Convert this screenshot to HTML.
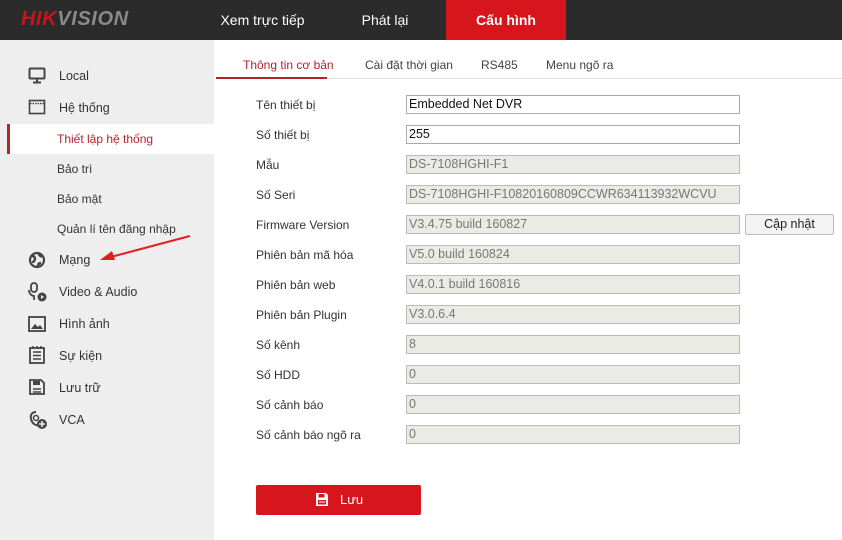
<!DOCTYPE html>
<html><head><meta charset="utf-8"><style>
*{margin:0;padding:0;box-sizing:border-box}
body{width:842px;height:540px;overflow:hidden;font-family:"Liberation Sans",Arial,sans-serif;font-size:12px;color:#333;background:#fff;position:relative}
.hdr{position:absolute;left:0;top:0;width:842px;height:40px;background:#2b2b2b}
.logo{position:absolute;left:21px;top:8px;font-size:20px;font-weight:bold;font-style:italic;letter-spacing:0.6px;color:#8a8a8a}
.logo b{color:#c8151d}
.nav{position:absolute;top:0;height:40px;line-height:40px;color:#fff;font-size:14px;text-align:center}
.side{position:absolute;left:0;top:40px;width:214px;height:500px;background:#eeeeee}
.it{position:absolute;left:59px;font-size:12.5px;color:#333}
.sub{position:absolute;left:57px;font-size:12px;color:#333}
.ic{position:absolute;left:28px}
.tab{position:absolute;top:58px;font-size:12px;color:#444}
.lbl{position:absolute;left:256px;font-size:12px;color:#333}
.inp{position:absolute;left:406px;width:334px;height:19px;border:1px solid #aaa;font-size:12.5px;line-height:17px;padding-left:2px;background:#fff;color:#111}
.ro{background:#ebebe6;color:#777;border-color:#bbb}
</style></head><body>
<div class="hdr">
<div class="logo"><b>HIK</b>VISION</div>
<div class="nav" style="left:205px;width:115px">Xem trực tiếp</div>
<div class="nav" style="left:340px;width:90px">Phát lại</div>
<div class="nav" style="left:446px;width:120px;background:#d7151d;font-weight:bold">Cấu hình</div>
</div>
<div class="side">
<svg class="ic" style="top:27px" width="18" height="17" viewBox="0 0 18 17"><rect x="1.5" y="1.5" width="15" height="10" rx="1" fill="none" stroke="#444" stroke-width="2"/><path d="M9 12v3M5 15.5h8" stroke="#444" stroke-width="2"/></svg>
<div class="it" style="top:29px">Local</div>
<svg class="ic" style="top:59px" width="18" height="16" viewBox="0 0 18 16"><rect x="1.5" y="1.5" width="15" height="13" fill="none" stroke="#444" stroke-width="1.6"/><path d="M2 4.5h14" stroke="#444" stroke-width="1.5" stroke-dasharray="1.5 1"/></svg>
<div class="it" style="top:61px">Hệ thống</div>
<div style="position:absolute;left:7px;top:84px;width:207px;height:30px;background:#fff"></div>
<div style="position:absolute;left:7px;top:84px;width:3px;height:30px;background:#b5232b"></div>
<div class="sub" style="top:92px;color:#b5232b">Thiết lập hệ thống</div>
<div class="sub" style="top:122px">Bảo trì</div>
<div class="sub" style="top:152px">Bảo mật</div>
<div class="sub" style="top:182px">Quản lí tên đăng nhập</div>
<svg class="ic" style="top:211px" width="18" height="18" viewBox="0 0 18 18"><circle cx="9" cy="9" r="7" fill="none" stroke="#444" stroke-width="2.2"/><path d="M4 5c2 0 3 1 3 3s-2 2-2 4 M11 3c0 2 2 2 3 3M10 15c0-2 1-3 3-3" stroke="#444" stroke-width="2.4" fill="none"/></svg>
<div class="it" style="top:213px">Mạng</div>
<svg class="ic" style="top:242px" width="20" height="20" viewBox="0 0 20 20"><rect x="3" y="1" width="6" height="9" rx="3" fill="none" stroke="#444" stroke-width="1.8"/><path d="M1 8c0 4 3 6 5 6v4" stroke="#444" stroke-width="1.8" fill="none"/><circle cx="14" cy="15" r="4.5" fill="#444"/><path d="M13 13v4l3-2z" fill="#eee"/></svg>
<div class="it" style="top:245px">Video &amp; Audio</div>
<svg class="ic" style="top:276px" width="18" height="16" viewBox="0 0 18 16"><rect x="1" y="1" width="16" height="14" fill="none" stroke="#444" stroke-width="1.8"/><path d="M3 13l4-5 3 3 2-2 3 4z" fill="#444"/></svg>
<div class="it" style="top:277px">Hình ảnh</div>
<svg class="ic" style="top:306px" width="18" height="18" viewBox="0 0 18 18"><rect x="2" y="2" width="14" height="15" fill="none" stroke="#444" stroke-width="1.8"/><path d="M5 6h8M5 9.5h8M5 13h8M5 0v3M9 0v3M13 0v3" stroke="#444" stroke-width="1.5"/></svg>
<div class="it" style="top:309px">Sự kiện</div>
<svg class="ic" style="top:338px" width="18" height="18" viewBox="0 0 18 18"><path d="M2 2h11l3 3v11H2z" fill="none" stroke="#444" stroke-width="1.8"/><rect x="5" y="3" width="7" height="4" fill="#444"/><path d="M5 11h8M5 14h8" stroke="#444" stroke-width="1.5"/></svg>
<div class="it" style="top:341px">Lưu trữ</div>
<svg class="ic" style="top:370px" width="20" height="20" viewBox="0 0 20 20"><path d="M8 2C4 2 2 5 3 9s4 7 8 6" fill="none" stroke="#444" stroke-width="2"/><circle cx="8" cy="8" r="2.5" fill="none" stroke="#444" stroke-width="1.5"/><circle cx="14" cy="14" r="5" fill="#444"/><path d="M14 11v6M11 14h6" stroke="#eee" stroke-width="1.6"/></svg>
<div class="it" style="top:373px">VCA</div>
</div>
<svg style="position:absolute;left:95px;top:230px" width="100" height="35"><path d="M95 6L12 28" stroke="#e02020" stroke-width="2"/><path d="M5 30l12-9 3 9z" fill="#e02020"/></svg>
<div class="tab" style="left:243px;color:#b5232b">Thông tin cơ bản</div>
<div class="tab" style="left:365px">Cài đặt thời gian</div>
<div class="tab" style="left:481px">RS485</div>
<div class="tab" style="left:546px">Menu ngõ ra</div>
<div style="position:absolute;left:216px;top:78px;width:626px;height:1px;background:#ddd"></div>
<div style="position:absolute;left:216px;top:77px;width:111px;height:2px;background:#b5232b"></div>

<div class="lbl" style="top:98px">Tên thiết bị</div><div class="inp" style="top:95px">Embedded Net DVR</div>
<div class="lbl" style="top:128px">Số thiết bị</div><div class="inp" style="top:125px">255</div>
<div class="lbl" style="top:158px">Mẫu</div><div class="inp ro" style="top:155px">DS-7108HGHI-F1</div>
<div class="lbl" style="top:188px">Số Seri</div><div class="inp ro" style="top:185px">DS-7108HGHI-F10820160809CCWR634113932WCVU</div>
<div class="lbl" style="top:218px">Firmware Version</div><div class="inp ro" style="top:215px">V3.4.75 build 160827</div>
<div style="position:absolute;left:745px;top:214px;width:89px;height:21px;border:1px solid #bbb;border-radius:2px;background:#f3f3f3;font-size:12.5px;text-align:center;line-height:19px;color:#222">Cập nhật</div>
<div class="lbl" style="top:248px">Phiên bản mã hóa</div><div class="inp ro" style="top:245px">V5.0 build 160824</div>
<div class="lbl" style="top:278px">Phiên bản web</div><div class="inp ro" style="top:275px">V4.0.1 build 160816</div>
<div class="lbl" style="top:308px">Phiên bản Plugin</div><div class="inp ro" style="top:305px">V3.0.6.4</div>
<div class="lbl" style="top:338px">Số kênh</div><div class="inp ro" style="top:335px">8</div>
<div class="lbl" style="top:368px">Số HDD</div><div class="inp ro" style="top:365px">0</div>
<div class="lbl" style="top:398px">Số cảnh báo</div><div class="inp ro" style="top:395px">0</div>
<div class="lbl" style="top:428px">Số cảnh báo ngõ ra</div><div class="inp ro" style="top:425px">0</div>

<div style="position:absolute;left:256px;top:485px;width:165px;height:30px;background:#d7151d;border-radius:2px;color:#fff;font-size:13px;line-height:30px">
<svg style="position:absolute;left:59px;top:7px" width="14" height="15" viewBox="0 0 14 15"><path d="M1 1h10l2 2v11H1z" fill="#fff"/><rect x="3.5" y="2" width="6" height="3.5" fill="#d7151d"/><rect x="3" y="8" width="8" height="4.5" fill="#d7151d"/><path d="M4 10h6" stroke="#fff"/></svg>
<span style="position:absolute;left:84px">Lưu</span></div>
</body></html>
